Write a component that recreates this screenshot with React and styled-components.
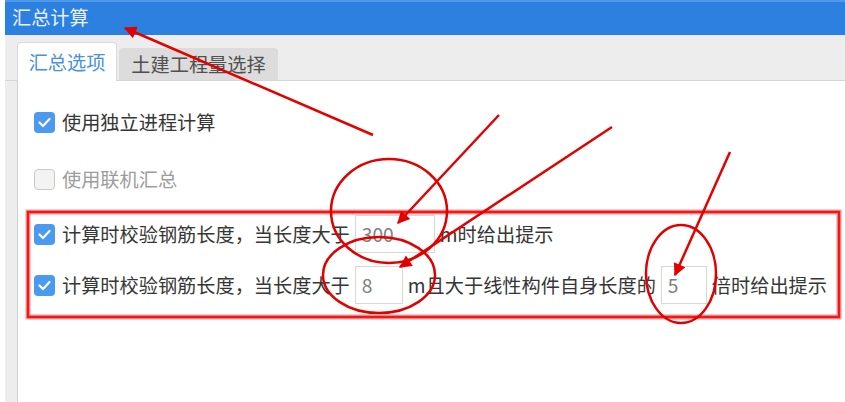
import styled, { createGlobalStyle } from "styled-components";

const GlobalStyle = createGlobalStyle`
  html, body {
    margin: 0;
    padding: 0;
    background: #ffffff;
  }
  body {
    font-family: "Noto Sans CJK SC", "Noto Sans", sans-serif;
  }
`;

const Window = styled.div`
  position: relative;
  width: 845px;
  height: 402px;
  overflow: hidden;
  background: #ffffff;
`;

const TitleBar = styled.div`
  height: 35px;
  margin-left: 5px;
  padding-left: 7px;
  box-sizing: border-box;
  background: #2b80e0;
  border-top: 2px solid #4f98ea;
  color: #eaf2fc;
  font-size: 19.2px;
  line-height: 30px;
`;

const Frame = styled.div`
  margin-left: 5px;
  height: 367px;
  background: #ededed;
  display: flex;
  flex-direction: column;
`;

const TabBar = styled.div`
  height: 46px;
  box-sizing: border-box;
  padding-left: 12px;
  display: flex;
  align-items: flex-end;
  border-bottom: 1px solid #d6d6d6;
`;

const Tab = styled.div`
  box-sizing: border-box;
  width: ${(p) => p.$width}px;
  height: ${(p) => (p.$active ? 39 : 32)}px;
  margin-right: 2px;
  margin-bottom: ${(p) => (p.$active ? -1 : 0)}px;
  display: flex;
  align-items: center;
  justify-content: center;
  font-size: 19.2px;
  color: ${(p) => (p.$active ? "#4a90e2" : "#505050")};
  background: ${(p) => (p.$active ? "#ffffff" : "#dcdcdc")};
  border: ${(p) => (p.$active ? "1px solid #d9d9d9" : "none")};
  border-bottom: none;
  border-radius: 4px 4px 0 0;
`;

const Panel = styled.div`
  flex: 1;
  margin-left: 12px;
  background: #ffffff;
  border-left: 1px solid #cfcfcf;
  padding: 21px 0 0 16px;
  display: flex;
  flex-direction: column;
`;

const Row = styled.div`
  height: 40px;
  margin-top: ${(p) => p.$mt || 0}px;
  display: flex;
  align-items: center;
  font-size: 19.2px;
  white-space: nowrap;
  color: ${(p) => (p.$disabled ? "#9c9c9c" : "#363636")};
`;

const Box = styled.span`
  box-sizing: border-box;
  width: 21px;
  height: 21px;
  margin-right: 7px;
  border-radius: 4px;
  display: inline-flex;
  align-items: center;
  justify-content: center;
  background: ${(p) => (p.$checked ? "#4a9bef" : "#f3f3f3")};
  border: ${(p) => (p.$checked ? "none" : "1.5px solid #c9c9c9")};
`;

const Field = styled.span`
  box-sizing: border-box;
  width: ${(p) => p.$width}px;
  height: 38px;
  margin: 0 5px;
  padding-left: 6px;
  display: inline-flex;
  align-items: center;
  border: 1px solid #d8d8d8;
  color: #808080;
  background: #ffffff;
`;

const Overlay = styled.svg`
  position: absolute;
  left: 0;
  top: 0;
  pointer-events: none;
`;

const Check = ({ checked, disabled }) => (
  <Box $checked={checked} $disabled={disabled}>
    {checked && (
      <svg width="13" height="11" viewBox="0 0 13 11">
        <path
          d="M1.5 5.5 L5 9 L11.5 2"
          fill="none"
          stroke="#ffffff"
          strokeWidth="2.2"
          strokeLinecap="round"
          strokeLinejoin="round"
        />
      </svg>
    )}
  </Box>
);

const arrows = [
  [373, 135, 125, 28],
  [499, 115, 398, 223],
  [612, 127, 400, 267],
  [730, 152, 675, 275],
];

const rings = [
  [389, 211, 58, 52],
  [379, 275, 56, 38],
  [681, 274, 35, 49],
];

const Annotations = () => (
  <Overlay width="845" height="402" viewBox="0 0 845 402">
    <defs>
      <marker
        id="head"
        viewBox="0 0 10 10"
        refX="9"
        refY="5"
        markerWidth="7"
        markerHeight="5"
        orient="auto"
      >
        <path d="M0 0 L10 5 L0 10 Z" fill="#e30000" />
      </marker>
    </defs>
    <rect
      x="28"
      y="212"
      width="811"
      height="105"
      fill="none"
      stroke="#ff4a4a"
      strokeWidth="5"
      opacity="0.55"
    />
    <rect
      x="28"
      y="212"
      width="811"
      height="105"
      fill="none"
      stroke="#f01818"
      strokeWidth="2.5"
    />
    {rings.map(([cx, cy, rx, ry], i) => (
      <ellipse
        key={i}
        cx={cx}
        cy={cy}
        rx={rx}
        ry={ry}
        fill="none"
        stroke="#e00000"
        strokeWidth="2.5"
      />
    ))}
    {arrows.map(([x1, y1, x2, y2], i) => (
      <line
        key={i}
        x1={x1}
        y1={y1}
        x2={x2}
        y2={y2}
        stroke="#e30000"
        strokeWidth="2.5"
        markerEnd="url(#head)"
      />
    ))}
  </Overlay>
);

export default function App() {
  return (
    <Window>
      <GlobalStyle />
      <TitleBar>汇总计算</TitleBar>
      <Frame>
        <TabBar>
          <Tab $active $width={100}>
            汇总选项
          </Tab>
          <Tab $width={159}>土建工程量选择</Tab>
        </TabBar>
        <Panel>
          <Row>
            <Check checked />
            使用独立进程计算
          </Row>
          <Row $mt={17} $disabled>
            <Check disabled />
            使用联机汇总
          </Row>
          <Row $mt={15}>
            <Check checked />
            计算时校验钢筋长度，当长度大于
            <Field $width={80}>300</Field>
            m时给出提示
          </Row>
          <Row $mt={11}>
            <Check checked />
            计算时校验钢筋长度，当长度大于
            <Field $width={48}>8</Field>
            m且大于线性构件自身长度的
            <Field $width={46}>5</Field>
            倍时给出提示
          </Row>
        </Panel>
      </Frame>
      <Annotations />
    </Window>
  );
}
